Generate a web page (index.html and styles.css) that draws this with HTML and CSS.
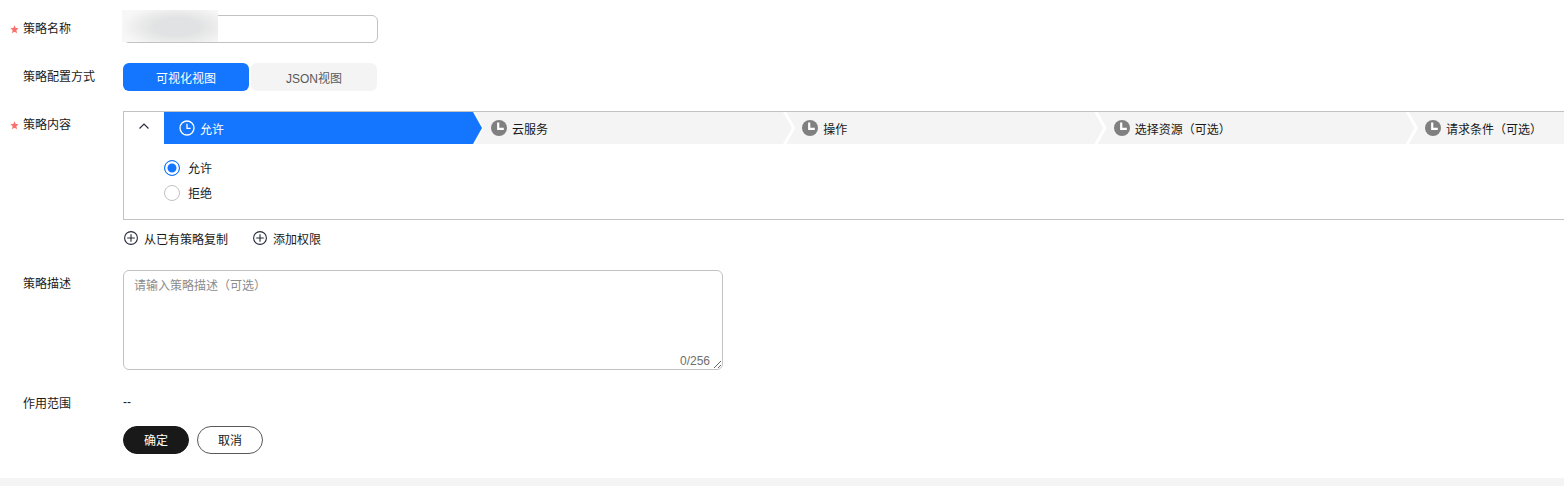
FILE: index.html
```html
<!DOCTYPE html>
<html lang="zh-CN">
<head>
    <meta charset="UTF-8">
    <meta name="viewport" content="width=device-width, initial-scale=1.0">
    <title>策略</title>
    <link rel="stylesheet" href="styles.css">
</head>
<body>
    <div class="page">
        <form class="form">
            <div class="row row-name">
                <label class="label">
                    <svg class="star" width="9" height="9" viewBox="0 0 10 10"><path d="M5 .4 6.290 3.420 9.570 3.720 7.090 5.880 7.820 9.080 5 7.400 2.180 9.080 2.910 5.880 .43 3.720 3.710 3.420Z" fill="#f66f6a"/></svg>
                    策略名称
                </label>
                <div class="name-box">
                    <input type="text" class="name-input">
                    <div class="name-mask"></div>
                </div>
            </div>

            <div class="row row-mode">
                <label class="label">策略配置方式</label>
                <div class="toggle">
                    <button type="button" class="toggle-btn active">可视化视图</button>
                    <button type="button" class="toggle-btn">JSON视图</button>
                </div>
            </div>

            <div class="row row-content">
                <label class="label">
                    <svg class="star" width="9" height="9" viewBox="0 0 10 10"><path d="M5 .4 6.290 3.420 9.570 3.720 7.090 5.880 7.820 9.080 5 7.400 2.180 9.080 2.910 5.880 .43 3.720 3.710 3.420Z" fill="#f66f6a"/></svg>
                    策略内容
                </label>
                <div class="content">
                    <div class="panel">
                        <div class="steps">
                            <div class="collapse">
                                <svg width="12" height="8" viewBox="0 0 12 8"><path d="M1.500 6.500 6 2l4.500 4.500" fill="none" stroke="#252b3a" stroke-width="1.100"/></svg>
                            </div>
                            <div class="step step-first">
                                <svg class="step-icon" width="16" height="16" viewBox="0 0 16 16"><circle cx="8" cy="8" r="7" fill="none" stroke="#fff" stroke-width="1.300"/><path d="M8 3.800V8.300H11.600" fill="none" stroke="#fff" stroke-width="1.300"/></svg>
                                <span>允许</span>
                            </div>
                            <div class="step">
                                <svg class="step-icon" width="16" height="16" viewBox="0 0 16 16"><circle cx="8" cy="8" r="8" fill="#808080"/><path d="M7.200 2.500V8.800H12.800" fill="none" stroke="#fff" stroke-width="2.200"/></svg>
                                <span>云服务</span>
                            </div>
                            <div class="step">
                                <svg class="step-icon" width="16" height="16" viewBox="0 0 16 16"><circle cx="8" cy="8" r="8" fill="#808080"/><path d="M7.200 2.500V8.800H12.800" fill="none" stroke="#fff" stroke-width="2.200"/></svg>
                                <span>操作</span>
                            </div>
                            <div class="step">
                                <svg class="step-icon" width="16" height="16" viewBox="0 0 16 16"><circle cx="8" cy="8" r="8" fill="#808080"/><path d="M7.200 2.500V8.800H12.800" fill="none" stroke="#fff" stroke-width="2.200"/></svg>
                                <span>选择资源（可选）</span>
                            </div>
                            <div class="step">
                                <svg class="step-icon" width="16" height="16" viewBox="0 0 16 16"><circle cx="8" cy="8" r="8" fill="#808080"/><path d="M7.200 2.500V8.800H12.800" fill="none" stroke="#fff" stroke-width="2.200"/></svg>
                                <span>请求条件（可选）</span>
                            </div>
                        </div>
                        <div class="radios">
                            <div class="radio-line"><span class="radio checked"></span><span class="radio-text">允许</span></div>
                            <div class="radio-line"><span class="radio"></span><span class="radio-text">拒绝</span></div>
                        </div>
                    </div>
                    <div class="links">
                        <a class="link">
                            <svg width="14" height="14" viewBox="0 0 14 14"><circle cx="7" cy="7" r="6.400" fill="none" stroke="#252b3a" stroke-width="1.100"/><path d="M7 3.200v7.600M3.200 7h7.600" stroke="#252b3a" stroke-width="1.100"/></svg>
                            从已有策略复制
                        </a>
                        <a class="link">
                            <svg width="14" height="14" viewBox="0 0 14 14"><circle cx="7" cy="7" r="6.400" fill="none" stroke="#252b3a" stroke-width="1.100"/><path d="M7 3.200v7.600M3.200 7h7.600" stroke="#252b3a" stroke-width="1.100"/></svg>
                            添加权限
                        </a>
                    </div>
                </div>
            </div>

            <div class="row row-desc">
                <label class="label">策略描述</label>
                <div class="desc">
                    <textarea class="desc-input" placeholder="请输入策略描述（可选）"></textarea>
                    <span class="desc-count">0/256</span>
                </div>
            </div>

            <div class="row row-scope">
                <label class="label">作用范围</label>
                <div class="scope-value">--</div>
            </div>

            <div class="actions">
                <button type="button" class="btn btn-primary">确定</button>
                <button type="button" class="btn">取消</button>
            </div>
        </form>
        <div class="footer-band"></div>
    </div>
</body>
</html>
```

FILE: styles.css
```css
* {
    box-sizing: border-box;
}
html, body {
    margin: 0;
    height: 100%;
    overflow: hidden;
}
body {
    background-color: #fff;
    color: #191919;
    font-family: "Liberation Sans", "Noto Sans CJK SC", sans-serif;
    font-size: 12px;
}
.page {
    display: flex;
    flex-direction: column;
    height: 486px;
}
.form {
    flex: 1;
}
.row {
    display: flex;
}
.label {
    flex: none;
    width: 123px;
    padding-left: 23px;
    position: relative;
    line-height: 18px;
}
.star {
    position: absolute;
    left: 10px;
    top: 10px;
}
.row-name {
    padding-top: 15px;
}
.row-name .label {
    padding-top: 5px;
}
.name-box {
    position: relative;
}
.name-input {
    display: block;
    width: 255px;
    height: 28px;
    border: 1px solid #c2c2c2;
    border-radius: 6px;
    background-color: #fff;
    outline: none;
}
.name-mask {
    position: absolute;
    left: -1px;
    top: -5px;
    width: 96px;
    height: 32px;
    background: radial-gradient(ellipse 56px 22px at 55px 17px, #e1e2e3 40%, #ececec 70%, #f7f7f7 100%);
}
.row-mode {
    padding-top: 20px;
}
.row-mode .label {
    padding-top: 5px;
}
.toggle {
    display: flex;
    gap: 2px;
}
.toggle-btn {
    width: 126px;
    height: 28px;
    border: none;
    border-radius: 6px;
    background-color: #f4f4f4;
    color: #595959;
    font-family: inherit;
    font-size: 12px;
    padding: 0;
}
.toggle-btn.active {
    background-color: #1476ff;
    color: #fff;
}
.row-content {
    padding-top: 20px;
}
.row-content .label {
    padding-top: 5px;
}
.content {
    flex: 1;
    min-width: 0;
}
.panel {
    height: 109px;
    border: 1px solid #c2c2c2;
    border-right: none;
    overflow: hidden;
}
.steps {
    display: flex;
    height: 32px;
}
.collapse {
    flex: none;
    width: 40px;
    display: flex;
    align-items: center;
    justify-content: center;
    padding-bottom: 5px;
}
.step {
    flex: none;
    width: 317px;
    margin-right: -5.700px;
    padding-left: 16px;
    display: flex;
    align-items: center;
    gap: 5px;
    background-color: #f4f4f4;
    clip-path: polygon(0 0, 308px 0, 317px 50%, 308px 100%, 0 100%, 9px 50%);
}
.step-first {
    width: 318px;
    margin-right: -7px;
    padding-left: 15px;
    background-color: #1476ff;
    color: #fff;
    clip-path: polygon(0 0, 309px 0, 318px 50%, 309px 100%, 0 100%);
}
.step-icon {
    flex: none;
}
.radios {
    padding: 16px 0 0 40px;
}
.radio-line {
    display: flex;
    align-items: center;
    gap: 8px;
    height: 16px;
    margin-bottom: 9px;
}
.radio-text {
    margin-bottom: 2px;
}
.radio {
    width: 16px;
    height: 16px;
    border: 1px solid #c2c2c2;
    border-radius: 50%;
    background-color: #fff;
}
.radio.checked {
    border-color: #1476ff;
    background-color: #1476ff;
    box-shadow: inset 0 0 0 2.500px #fff;
}
.links {
    display: flex;
    gap: 25px;
    padding: 9px 0 0 1px;
    height: 32px;
}
.link {
    display: flex;
    align-items: center;
    gap: 6px;
    height: 18px;
}
.row-desc {
    padding-top: 18px;
}
.row-desc .label {
    padding-top: 5px;
}
.desc {
    position: relative;
}
.desc-input {
    display: block;
    width: 600px;
    height: 100px;
    padding: 6px 10px;
    border: 1px solid #c2c2c2;
    border-radius: 6px;
    font-family: inherit;
    font-size: 12px;
    line-height: 18px;
    color: #191919;
    outline: none;
}
.desc-input::placeholder {
    color: #8c8c8c;
}
.desc-count {
    position: absolute;
    right: 13px;
    bottom: 1px;
    color: #6e6e6e;
    line-height: 16px;
}
.row-scope {
    padding-top: 24px;
}
.row-scope .label {
    padding-top: 1px;
}
.scope-value {
    line-height: 16px;
}
.actions {
    display: flex;
    gap: 8px;
    padding: 13px 0 0 123px;
}
.btn {
    width: 66px;
    height: 28px;
    padding: 0 0 2px;
    border: 1px solid #595959;
    border-radius: 14px;
    background-color: #fff;
    color: #191919;
    font-family: inherit;
    font-size: 12px;
}
.btn-primary {
    border-color: #191919;
    background-color: #191919;
    color: #fff;
}
.footer-band {
    flex: none;
    height: 8px;
    background-color: #f4f4f4;
}
```
